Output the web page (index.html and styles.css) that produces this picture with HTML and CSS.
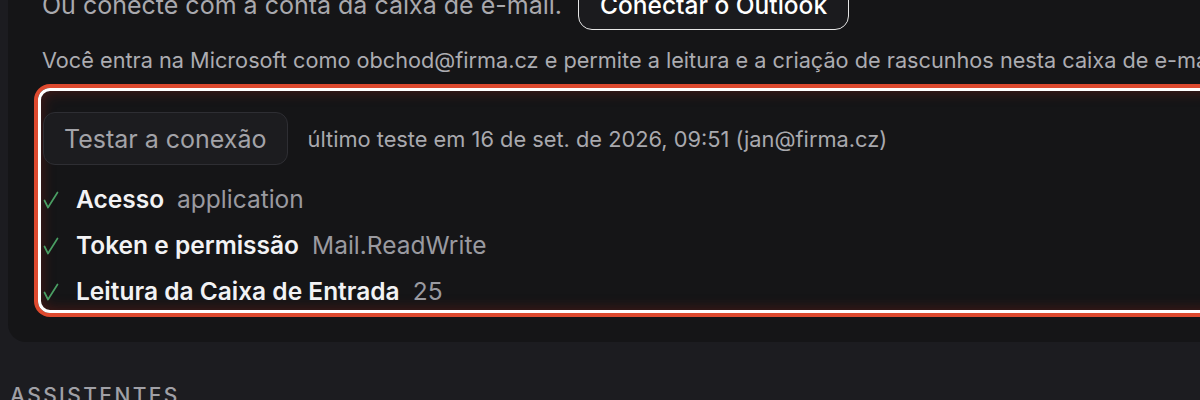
FILE: index.html
```html
<!DOCTYPE html>
<html lang="pt">
<head>
<meta charset="utf-8">
<title>Conexão</title>
<link rel="stylesheet" href="styles.css">
</head>
<body>
<div class="page">
  <section class="panel">
    <div class="connect-row">
      <span class="connect-label">Ou conecte com a conta da caixa de e-mail.</span>
      <button class="btn-outlook">Conectar o Outlook</button>
    </div>
    <p class="note">Você entra na Microsoft como obchod@firma.cz e permite a leitura e a criação de rascunhos nesta caixa de e-mail sem armazenar a sua senha.</p>
    <div class="test-box">
      <div class="test-head">
        <button class="btn-test">Testar a conexão</button>
        <span class="last-test">último teste em 16 de set. de 2026, 09:51 (jan@firma.cz)</span>
      </div>
      <ul class="checks">
        <li class="check"><svg class="tick" viewBox="0 0 16 18" aria-hidden="true"><path d="M1.5 9.5 L5 16.5 L14.5 1.5"/></svg><span class="check-name">Acesso</span><span class="check-val">application</span></li>
        <li class="check"><svg class="tick" viewBox="0 0 16 18" aria-hidden="true"><path d="M1.5 9.5 L5 16.5 L14.5 1.5"/></svg><span class="check-name">Token e permissão</span><span class="check-val">Mail.ReadWrite</span></li>
        <li class="check"><svg class="tick" viewBox="0 0 16 18" aria-hidden="true"><path d="M1.5 9.5 L5 16.5 L14.5 1.5"/></svg><span class="check-name">Leitura da Caixa de Entrada</span><span class="check-val">25</span></li>
      </ul>
    </div>
  </section>
  <h2 class="section-title">Assistentes</h2>
</div>
</body>
</html>
```
FILE: styles.css
```css
html, body {
  margin: 0;
  padding: 0;
  background: #1c1c20;
  overflow: hidden;
  width: 1200px;
  height: 400px;
}
body {
  font-family: Inter, "Noto Sans", sans-serif;
  color: #e8e8ea;
}
.page {
  width: 1700px;
  margin-top: -32px;
  padding-left: 8px;
}
.panel {
  background: #151517;
  border-radius: 18px;
  padding: 12px 0 29px 34px;
}
.connect-row {
  display: flex;
  align-items: center;
  gap: 16px;
  height: 50px;
}
.connect-label {
  font-size: 25px;
  color: #a9a9ae;
}
.btn-outlook {
  font-family: inherit;
  font-size: 24.5px;
  font-weight: 500;
  color: #ffffff;
  background: #1b1b1e;
  border: 1.5px solid #e6e6e6;
  border-radius: 14px;
  padding: 0 21px;
  height: 50px;
}
.note {
  margin: 16px 0 0;
  font-size: 21.7px;
  color: #acacb1;
  white-space: nowrap;
  line-height: 28px;
}
.test-box {
  margin: 14px 0 0 -4px;
  border: 3px solid #ffffff;
  border-radius: 12px;
  box-shadow: 0 0 0 4px #de4a2f, inset 0 0 14px rgba(120, 30, 20, 0.55);
  padding: 21px 0 4px 2px;
}
.test-head {
  display: flex;
  align-items: center;
  gap: 20px;
}
.btn-test {
  font-family: inherit;
  font-size: 25px;
  color: #a3a3a8;
  background: #1c1c1f;
  border: 1px solid #2e2e33;
  border-radius: 12px;
  height: 53px;
  padding: 0 20px;
}
.last-test {
  font-size: 21.8px;
  color: #a9a9ae;
}
.checks {
  list-style: none;
  margin: 19px 0 0;
  padding: 0;
  display: flex;
  flex-direction: column;
  gap: 16px;
}
.check {
  display: flex;
  align-items: center;
  height: 30px;
  line-height: 30px;
  font-size: 24.5px;
}
.tick {
  width: 16px;
  height: 18px;
  margin: 2px 17px 0 0;
  fill: none;
  stroke: #4a9e63;
  stroke-width: 1.7;
  stroke-linecap: round;
  stroke-linejoin: round;
  flex: none;
}
.check-name {
  color: #f2f2f4;
  font-weight: 560;
  margin-right: 13px;
}
.check-val {
  color: #9a9aa0;
}
.section-title {
  margin: 41px 0 0 2px;
  font-size: 21px;
  font-weight: 500;
  letter-spacing: 2.4px;
  text-transform: uppercase;
  color: #a0a0a6;
}
```
